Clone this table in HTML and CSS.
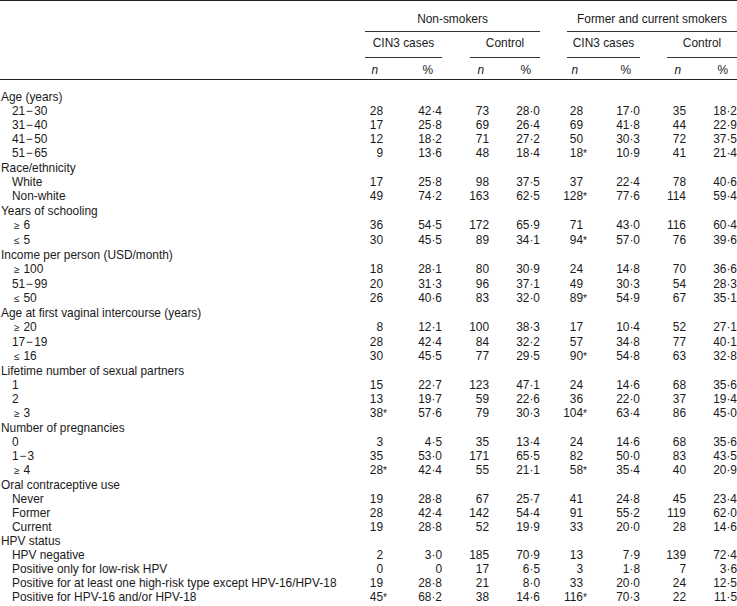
FILE: index.html
```html
<!DOCTYPE html>
<html lang="en">
<head>
<meta charset="utf-8">
<title>Table</title>
<link rel="stylesheet" href="styles.css">
</head>
<body>
<div class="table">
  <div class="grid head">
    <div class="h1 span-ns">Non-smokers</div>
    <div class="h1 span-fs">Former and current smokers</div>
    <div class="h2 span-c1">CIN3 cases</div>
    <div class="h2 span-c2">Control</div>
    <div class="h2 span-c3">CIN3 cases</div>
    <div class="h2 span-c4">Control</div>
    <div class="h3 nh col2">n</div>
    <div class="h3 ph col3">%</div>
    <div class="h3 nh col4">n</div>
    <div class="h3 ph col5">%</div>
    <div class="h3 nh col6">n</div>
    <div class="h3 ph col7">%</div>
    <div class="h3 nh col8">n</div>
    <div class="h3 ph col9">%</div>
  </div>
  <div class="grid body">
    <div class="grp">Age (years)</div>
    <div class="lab">21<span class="dash">−</span>30</div><div class="n">28</div><div class="p">42·4</div><div class="n">73</div><div class="p">28·0</div><div class="n">28</div><div class="p">17·0</div><div class="n">35</div><div class="p">18·2</div>
    <div class="lab">31<span class="dash">−</span>40</div><div class="n">17</div><div class="p">25·8</div><div class="n">69</div><div class="p">26·4</div><div class="n">69</div><div class="p">41·8</div><div class="n">44</div><div class="p">22·9</div>
    <div class="lab">41<span class="dash">−</span>50</div><div class="n">12</div><div class="p">18·2</div><div class="n">71</div><div class="p">27·2</div><div class="n">50</div><div class="p">30·3</div><div class="n">72</div><div class="p">37·5</div>
    <div class="lab">51<span class="dash">−</span>65</div><div class="n">9</div><div class="p">13·6</div><div class="n">48</div><div class="p">18·4</div><div class="n">18<span class="sig">*</span></div><div class="p">10·9</div><div class="n">41</div><div class="p">21·4</div>
    <div class="grp">Race/ethnicity</div>
    <div class="lab">White</div><div class="n">17</div><div class="p">25·8</div><div class="n">98</div><div class="p">37·5</div><div class="n">37</div><div class="p">22·4</div><div class="n">78</div><div class="p">40·6</div>
    <div class="lab">Non-white</div><div class="n">49</div><div class="p">74·2</div><div class="n">163</div><div class="p">62·5</div><div class="n">128<span class="sig">*</span></div><div class="p">77·6</div><div class="n">114</div><div class="p">59·4</div>
    <div class="grp">Years of schooling</div>
    <div class="lab"><span class="cmp">≥</span>6</div><div class="n">36</div><div class="p">54·5</div><div class="n">172</div><div class="p">65·9</div><div class="n">71</div><div class="p">43·0</div><div class="n">116</div><div class="p">60·4</div>
    <div class="lab"><span class="cmp">≤</span>5</div><div class="n">30</div><div class="p">45·5</div><div class="n">89</div><div class="p">34·1</div><div class="n">94<span class="sig">*</span></div><div class="p">57·0</div><div class="n">76</div><div class="p">39·6</div>
    <div class="grp">Income per person (USD/month)</div>
    <div class="lab"><span class="cmp">≥</span>100</div><div class="n">18</div><div class="p">28·1</div><div class="n">80</div><div class="p">30·9</div><div class="n">24</div><div class="p">14·8</div><div class="n">70</div><div class="p">36·6</div>
    <div class="lab">51<span class="dash">−</span>99</div><div class="n">20</div><div class="p">31·3</div><div class="n">96</div><div class="p">37·1</div><div class="n">49</div><div class="p">30·3</div><div class="n">54</div><div class="p">28·3</div>
    <div class="lab"><span class="cmp">≤</span>50</div><div class="n">26</div><div class="p">40·6</div><div class="n">83</div><div class="p">32·0</div><div class="n">89<span class="sig">*</span></div><div class="p">54·9</div><div class="n">67</div><div class="p">35·1</div>
    <div class="grp">Age at first vaginal intercourse (years)</div>
    <div class="lab"><span class="cmp">≥</span>20</div><div class="n">8</div><div class="p">12·1</div><div class="n">100</div><div class="p">38·3</div><div class="n">17</div><div class="p">10·4</div><div class="n">52</div><div class="p">27·1</div>
    <div class="lab">17<span class="dash">−</span>19</div><div class="n">28</div><div class="p">42·4</div><div class="n">84</div><div class="p">32·2</div><div class="n">57</div><div class="p">34·8</div><div class="n">77</div><div class="p">40·1</div>
    <div class="lab"><span class="cmp">≤</span>16</div><div class="n">30</div><div class="p">45·5</div><div class="n">77</div><div class="p">29·5</div><div class="n">90<span class="sig">*</span></div><div class="p">54·8</div><div class="n">63</div><div class="p">32·8</div>
    <div class="grp">Lifetime number of sexual partners</div>
    <div class="lab">1</div><div class="n">15</div><div class="p">22·7</div><div class="n">123</div><div class="p">47·1</div><div class="n">24</div><div class="p">14·6</div><div class="n">68</div><div class="p">35·6</div>
    <div class="lab">2</div><div class="n">13</div><div class="p">19·7</div><div class="n">59</div><div class="p">22·6</div><div class="n">36</div><div class="p">22·0</div><div class="n">37</div><div class="p">19·4</div>
    <div class="lab"><span class="cmp">≥</span>3</div><div class="n">38<span class="sig">*</span></div><div class="p">57·6</div><div class="n">79</div><div class="p">30·3</div><div class="n">104<span class="sig">*</span></div><div class="p">63·4</div><div class="n">86</div><div class="p">45·0</div>
    <div class="grp">Number of pregnancies</div>
    <div class="lab">0</div><div class="n">3</div><div class="p">4·5</div><div class="n">35</div><div class="p">13·4</div><div class="n">24</div><div class="p">14·6</div><div class="n">68</div><div class="p">35·6</div>
    <div class="lab">1<span class="dash">−</span>3</div><div class="n">35</div><div class="p">53·0</div><div class="n">171</div><div class="p">65·5</div><div class="n">82</div><div class="p">50·0</div><div class="n">83</div><div class="p">43·5</div>
    <div class="lab"><span class="cmp">≥</span>4</div><div class="n">28<span class="sig">*</span></div><div class="p">42·4</div><div class="n">55</div><div class="p">21·1</div><div class="n">58<span class="sig">*</span></div><div class="p">35·4</div><div class="n">40</div><div class="p">20·9</div>
    <div class="grp">Oral contraceptive use</div>
    <div class="lab">Never</div><div class="n">19</div><div class="p">28·8</div><div class="n">67</div><div class="p">25·7</div><div class="n">41</div><div class="p">24·8</div><div class="n">45</div><div class="p">23·4</div>
    <div class="lab">Former</div><div class="n">28</div><div class="p">42·4</div><div class="n">142</div><div class="p">54·4</div><div class="n">91</div><div class="p">55·2</div><div class="n">119</div><div class="p">62·0</div>
    <div class="lab">Current</div><div class="n">19</div><div class="p">28·8</div><div class="n">52</div><div class="p">19·9</div><div class="n">33</div><div class="p">20·0</div><div class="n">28</div><div class="p">14·6</div>
    <div class="grp">HPV status</div>
    <div class="lab">HPV negative</div><div class="n">2</div><div class="p">3·0</div><div class="n">185</div><div class="p">70·9</div><div class="n">13</div><div class="p">7·9</div><div class="n">139</div><div class="p">72·4</div>
    <div class="lab">Positive only for low-risk HPV</div><div class="n">0</div><div class="p">0</div><div class="n">17</div><div class="p">6·5</div><div class="n">3</div><div class="p">1·8</div><div class="n">7</div><div class="p">3·6</div>
    <div class="lab">Positive for at least one high-risk type except HPV-16/HPV-18</div><div class="n">19</div><div class="p">28·8</div><div class="n">21</div><div class="p">8·0</div><div class="n">33</div><div class="p">20·0</div><div class="n">24</div><div class="p">12·5</div>
    <div class="lab">Positive for HPV-16 and/or HPV-18</div><div class="n">45<span class="sig">*</span></div><div class="p">68·2</div><div class="n">38</div><div class="p">14·6</div><div class="n">116<span class="sig">*</span></div><div class="p">70·3</div><div class="n">22</div><div class="p">11·5</div>
  </div>
</div>
</body>
</html>
```

FILE: styles.css
```css
html, body {
  margin: 0;
  padding: 0;
  background: #ffffff;
}

body {
  color: #1a1a1a;
  font-family: "Liberation Sans", Arial, Helvetica, sans-serif;
  font-size: 11.9px;
  line-height: 14px;
}

.table {
  width: 737px;
  border-top: 1px solid #222;
  border-bottom: 1px solid #222;
}

.grid {
  display: grid;
  grid-template-columns: 345px 38px 59px 47px 51px 43px 57px 46px 51px;
}

.head {
  border-bottom: 1px solid #222;
}

.h1 {
  grid-row: 1;
  padding: 11px 0 5px;
  text-align: center;
  border-bottom: 1px solid #333;
}

.h2 {
  grid-row: 2;
  padding: 4px 0 7px;
  text-align: center;
  border-bottom: 1px solid #333;
}

.h3 {
  grid-row: 3;
  padding: 5px 0 2px;
  text-align: right;
}

.span-ns { grid-column: 2 / 6; margin-left: 20px; }
.span-fs { grid-column: 6 / 10; margin-left: 27px; }
.span-c1 { grid-column: 2 / 4; margin-left: 20px; }
.span-c2 { grid-column: 4 / 6; margin-left: 28px; }
.span-c3 { grid-column: 6 / 8; margin-left: 27px; }
.span-c4 { grid-column: 8 / 10; margin-left: 27px; }

.col2 { grid-column: 2; }
.col3 { grid-column: 3; }
.col4 { grid-column: 4; }
.col5 { grid-column: 5; }
.col6 { grid-column: 6; }
.col7 { grid-column: 7; }
.col8 { grid-column: 8; }
.col9 { grid-column: 9; }

.nh {
  font-style: italic;
  padding-right: 5px;
}

.ph {
  padding-right: 9px;
}

.body {
  padding: 10px 0 9px;
}

.grp {
  grid-column: 1 / -1;
  padding-left: 1px;
  white-space: nowrap;
}

.lab {
  padding-left: 12px;
  white-space: nowrap;
}

.dash {
  margin: 0 1px;
}

.cmp {
  display: inline-block;
  margin: 0 4px 0 2px;
  font-size: 10px;
}

.n,
.p {
  text-align: right;
  white-space: nowrap;
}

.sig {
  display: inline-block;
  width: 0;
  font-size: 10px;
}
```
